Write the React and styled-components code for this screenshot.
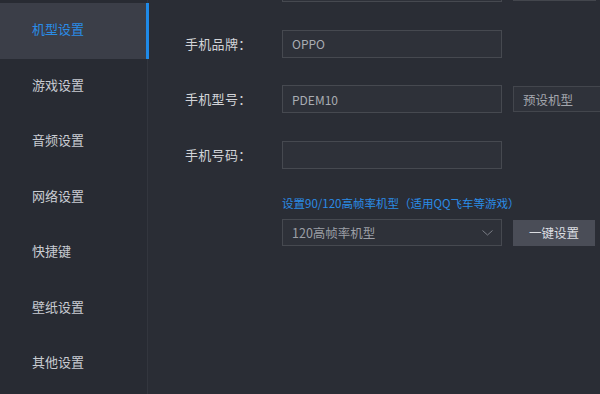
import styled, { createGlobalStyle } from "styled-components";

const GlobalStyle = createGlobalStyle`
  html, body {
    margin: 0;
    padding: 0;
    background: #2a2d35;
  }
  body {
    font-family: "Noto Sans CJK SC", "Noto Sans", sans-serif;
    overflow: hidden;
  }
`;

const StyledWindow = styled.div`
  display: flex;
  width: 600px;
  height: 394px;
  overflow: hidden;
  background-color: #2a2d35;
`;
const StyledSidebar = styled.nav`
  display: flex;
  flex-direction: column;
  width: 147px;
  padding-top: 3px;
  background-color: #282b33;
  border-right: 1px solid #33363e;
  flex-shrink: 0;
`;
const StyledNavItem = styled.div`
  position: relative;
  box-sizing: border-box;
  height: 55.5px;
  display: flex;
  align-items: center;
  padding: 0 0 3px 32px;
  font-size: 13px;
  line-height: 16px;
  color: ${(props) => (props.$active ? "#2a8ce6" : "#c9ccd2")};
  background-color: ${(props) => (props.$active ? "#3b3e48" : "transparent")};
  &:after {
    content: "";
    display: ${(props) => (props.$active ? "block" : "none")};
    position: absolute;
    right: -2px;
    top: 0;
    bottom: 0;
    width: 3px;
    background-color: #1f8ae8;
  }
`;
const StyledMain = styled.main`
  flex: 1;
  padding-left: 37px;
  margin-top: -26px;
  display: flex;
  flex-direction: column;
`;
const StyledRow = styled.div`
  display: grid;
  grid-template-columns: 86px 220px 82px;
  column-gap: 11px;
  align-items: center;
  height: 28px;
  margin-bottom: ${(props) => props.$gap || "27.5px"};
`;
const StyledLabel = styled.label`
  font-size: 13px;
  line-height: 16px;
  color: #d2d4d8;
  letter-spacing: 0.3px;
  white-space: nowrap;
`;
const StyledInput = styled.div`
  box-sizing: border-box;
  height: ${(props) => props.$height || "28px"};
  border: 1px solid #464950;
  background-color: #2e3139;
  padding-left: 9px;
  display: flex;
  align-items: center;
  font-size: 12px;
  color: #a9acb2;
  font-family: "Noto Sans CJK SC", "Noto Sans", sans-serif;
`;
const StyledSelect = styled(StyledInput)`
  justify-content: space-between;
  padding-right: 8px;
  font-size: 12.5px;
  color: #9c9fa6;
`;
const StyledButton = styled.button`
  box-sizing: border-box;
  height: ${(props) => props.$height || "26px"};
  border: ${(props) => (props.$primary ? "none" : "1px solid #43464d")};
  background-color: ${(props) => (props.$primary ? "#4a4d57" : "#2f323a")};
  color: ${(props) => (props.$primary ? "#dcdee2" : "#a3a6ad")};
  font-size: 12.5px;
  font-family: "Noto Sans CJK SC", "Noto Sans", sans-serif;
  text-align: ${(props) => (props.$primary ? "center" : "left")};
  padding: 0 0 0 ${(props) => (props.$primary ? "0" : "9px")};
  width: ${(props) => props.$width || "82px"};
`;
const StyledHint = styled.p`
  margin: 0 0 9px 97px;
  font-size: 11.5px;
  line-height: 14px;
  color: #2a8ce6;
`;

const Chevron = () => (
  <svg width="11" height="6" viewBox="0 0 11 6" fill="none">
    <path d="M0.5 0.5 L5.5 5 L10.5 0.5" stroke="#7b7e86" strokeWidth="1" />
  </svg>
);

const navItems = ["机型设置", "游戏设置", "音频设置", "网络设置", "快捷键", "壁纸设置", "其他设置"];

const App = () => {
  return (
    <>
      <GlobalStyle />
      <StyledWindow>
        <StyledSidebar>
          {navItems.map((item, i) => (
            <StyledNavItem key={item} $active={i === 0}>
              {item}
            </StyledNavItem>
          ))}
        </StyledSidebar>
        <StyledMain>
          <StyledRow>
            <StyledLabel></StyledLabel>
            <StyledInput />
            <StyledButton $width="83px" />
          </StyledRow>
          <StyledRow>
            <StyledLabel>手机品牌：</StyledLabel>
            <StyledInput>OPPO</StyledInput>
          </StyledRow>
          <StyledRow>
            <StyledLabel>手机型号：</StyledLabel>
            <StyledInput>PDEM10</StyledInput>
            <StyledButton $width="100px">预设机型</StyledButton>
          </StyledRow>
          <StyledRow $gap="27px">
            <StyledLabel>手机号码：</StyledLabel>
            <StyledInput />
          </StyledRow>
          <StyledHint>设置90/120高帧率机型（适用QQ飞车等游戏）</StyledHint>
          <StyledRow $gap="0">
            <StyledLabel></StyledLabel>
            <StyledSelect $height="27px">
              120高帧率机型
              <Chevron />
            </StyledSelect>
            <StyledButton $primary>一键设置</StyledButton>
          </StyledRow>
        </StyledMain>
      </StyledWindow>
    </>
  );
};

export default App;
